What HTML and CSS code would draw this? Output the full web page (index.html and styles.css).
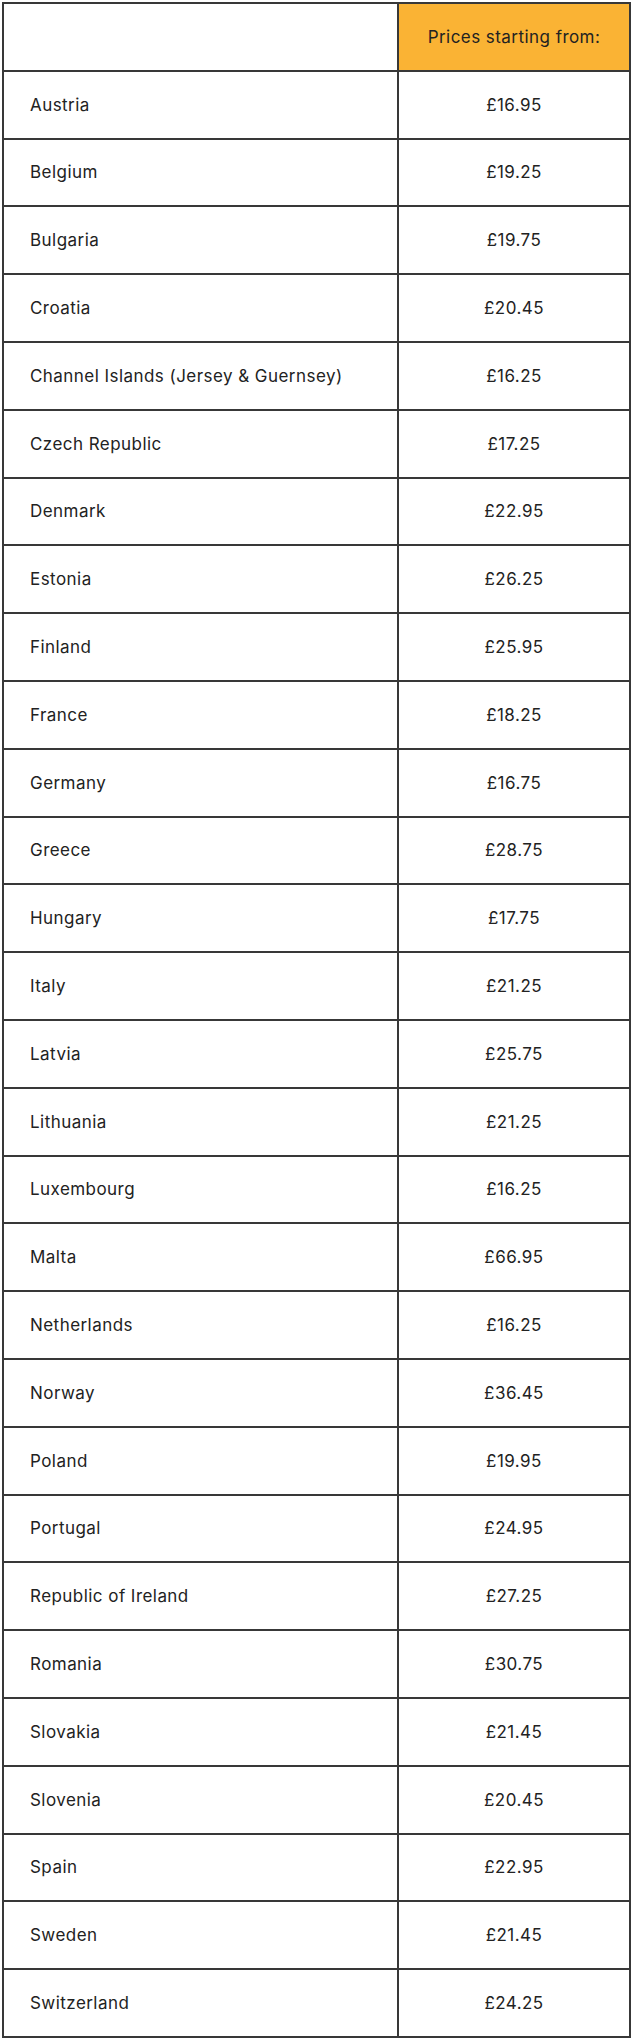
FILE: index.html
```html
<!DOCTYPE html>
<html lang="en">
<head>
<meta charset="utf-8">
<title>Prices</title>
<link rel="stylesheet" href="styles.css">
</head>
<body>
<table class="prices">
  <thead>
    <tr><th class="country-head"></th><th class="price-head">Prices starting from:</th></tr>
  </thead>
  <tbody>
    <tr><td class="country">Austria</td><td class="price">£16.95</td></tr>
    <tr><td class="country">Belgium</td><td class="price">£19.25</td></tr>
    <tr><td class="country">Bulgaria</td><td class="price">£19.75</td></tr>
    <tr><td class="country">Croatia</td><td class="price">£20.45</td></tr>
    <tr><td class="country">Channel Islands (Jersey &amp; Guernsey)</td><td class="price">£16.25</td></tr>
    <tr><td class="country">Czech Republic</td><td class="price">£17.25</td></tr>
    <tr><td class="country">Denmark</td><td class="price">£22.95</td></tr>
    <tr><td class="country">Estonia</td><td class="price">£26.25</td></tr>
    <tr><td class="country">Finland</td><td class="price">£25.95</td></tr>
    <tr><td class="country">France</td><td class="price">£18.25</td></tr>
    <tr><td class="country">Germany</td><td class="price">£16.75</td></tr>
    <tr><td class="country">Greece</td><td class="price">£28.75</td></tr>
    <tr><td class="country">Hungary</td><td class="price">£17.75</td></tr>
    <tr><td class="country">Italy</td><td class="price">£21.25</td></tr>
    <tr><td class="country">Latvia</td><td class="price">£25.75</td></tr>
    <tr><td class="country">Lithuania</td><td class="price">£21.25</td></tr>
    <tr><td class="country">Luxembourg</td><td class="price">£16.25</td></tr>
    <tr><td class="country">Malta</td><td class="price">£66.95</td></tr>
    <tr><td class="country">Netherlands</td><td class="price">£16.25</td></tr>
    <tr><td class="country">Norway</td><td class="price">£36.45</td></tr>
    <tr><td class="country">Poland</td><td class="price">£19.95</td></tr>
    <tr><td class="country">Portugal</td><td class="price">£24.95</td></tr>
    <tr><td class="country">Republic of Ireland</td><td class="price">£27.25</td></tr>
    <tr><td class="country">Romania</td><td class="price">£30.75</td></tr>
    <tr><td class="country">Slovakia</td><td class="price">£21.45</td></tr>
    <tr><td class="country">Slovenia</td><td class="price">£20.45</td></tr>
    <tr><td class="country">Spain</td><td class="price">£22.95</td></tr>
    <tr><td class="country">Sweden</td><td class="price">£21.45</td></tr>
    <tr><td class="country">Switzerland</td><td class="price">£24.25</td></tr>
  </tbody>
</table>
</body>
</html>
```
FILE: styles.css
```css
html, body {
  margin: 0;
  padding: 0;
  background: #ffffff;
}
body {
  padding: 2px 1px 2px 2px;
  font-family: "Inter", "Liberation Sans", sans-serif;
  color: #222222;
}
.prices {
  border-collapse: collapse;
  width: 629px;
  table-layout: fixed;
  font-size: 17px;
  letter-spacing: 0.45px;
}
.prices th,
.prices td {
  border: 2px solid #383838;
  height: 65.8px;
  padding: 0;
  vertical-align: middle;
  font-weight: 400;
}
.prices .country-head {
  width: 393px;
}
.prices .country {
  text-align: left;
  padding-left: 26px;
}
.prices .price-head {
  background: #fab334;
  text-align: center;
}
.prices .price {
  text-align: center;
}
```
